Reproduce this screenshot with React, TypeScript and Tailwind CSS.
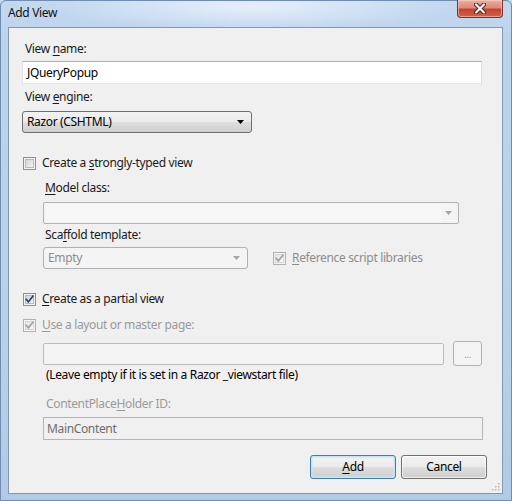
import React from "react";

const FONT = { fontFamily: '"Noto Sans", "Open Sans", sans-serif' };

function Mn({ children }: { children: React.ReactNode }) {
  return <span className="underline underline-offset-[2px] decoration-[1px]">{children}</span>;
}

function CheckBox({ checked, disabled }: { checked?: boolean; disabled?: boolean }) {
  const border = disabled ? "#b1b1b1" : "#8e8f8f";
  const mark = disabled ? "#a3a3a3" : "#30456f";
  const id = disabled ? "cbd" : "cbe";
  return (
    <svg width="13" height="13" viewBox="0 0 13 13" className="shrink-0">
      <defs>
        <linearGradient id={id} x1="0" y1="0" x2="1" y2="1">
          <stop offset="0" stopColor={disabled ? "#e6e6e6" : "#cfd2d6"} />
          <stop offset="1" stopColor={disabled ? "#f7f7f7" : "#f6f6f6"} />
        </linearGradient>
      </defs>
      <rect x="0.5" y="0.5" width="12" height="12" fill="#f4f4f4" stroke={border} />
      <rect x="2.5" y="2.5" width="8" height="8" fill={`url(#${id})`} stroke={disabled ? "#d6d6d6" : "#b7bbc0"} />
      {checked && (
        <path d="M3.2 6.4 L5.4 8.9 L9.9 3.2" fill="none" stroke={mark} strokeWidth="1.7" strokeLinecap="square" />
      )}
    </svg>
  );
}

function Arrow({ color }: { color: string }) {
  return (
    <svg width="7" height="4" viewBox="0 0 7 4" className="shrink-0">
      <polygon points="0,0 7,0 3.5,4" fill={color} />
    </svg>
  );
}

export default function App() {
  return (
    <div
      className="relative w-[512px] h-[501px] overflow-hidden text-[12px] leading-[16px] tracking-[-0.35px] text-[#1a1a1a] bg-[linear-gradient(180deg,#c3d9f0_0%,#bcd3ec_8%,#b9d1ea_60%,#b2cae5_100%)]"
      style={FONT}
    >
      {/* glass frame highlights */}
      <div className="absolute inset-0 pointer-events-none bg-[radial-gradient(ellipse_200px_26px_at_250px_6px,rgba(235,243,252,0.85),rgba(235,243,252,0))]" />
      <div className="absolute inset-0 pointer-events-none border border-[#6f8db3] rounded-t-[6px]" />

      <div className="relative flex flex-col h-full">
        {/* title bar */}
        <div className="flex items-start justify-between h-[27px] pl-[8px] pr-[9px]">
          <div className="pt-[5px] text-[12px] text-[#111]">Add View</div>
          <div className="w-[46px] h-[18px] flex items-center justify-center rounded-b-[4px] border border-t-0 border-[#7a3329] bg-[linear-gradient(180deg,#eab0a4_0%,#dd8a7b_45%,#c7432f_55%,#d3614a_100%)] shadow-[inset_0_0_0_1px_rgba(255,220,210,0.5)]">
            <svg width="14" height="11" viewBox="0 0 14 11">
              <path d="M3 1.5 L11 9.5 M11 1.5 L3 9.5" stroke="#5a1a12" strokeWidth="4" strokeLinecap="round" />
              <path d="M3 1.5 L11 9.5 M11 1.5 L3 9.5" stroke="#ffffff" strokeWidth="2.2" strokeLinecap="round" />
            </svg>
          </div>
        </div>

        {/* client area */}
        <div className="ml-[8px] mr-[9px] h-[467px] border border-[#8497b0] bg-[#f0f0f0]">
          <div className="flex flex-col pl-[13px]">
            <div className="mt-[13px] pl-[3px]">
              View <Mn>n</Mn>ame:
            </div>
            <div className="mt-[4px] w-[460px] h-[23px] flex items-center pl-[4px] bg-white border border-[#abadb3] border-l-[#e2e3ea] border-r-[#dbdfe6] border-b-[#e3e9ef] text-black">
              JQueryPopup
            </div>

            <div className="mt-[5px] pl-[3px]">
              View <Mn>e</Mn>ngine:
            </div>
            <div className="mt-[6px] w-[230px] h-[22px] flex items-center justify-between pl-[4px] pr-[7px] rounded-[3px] border border-[#707070] bg-[linear-gradient(180deg,#f2f2f2_0%,#ebebeb_48%,#dddddd_52%,#cfcfcf_100%)] text-black">
              <span>Razor (CSHTML)</span>
              <Arrow color="#000" />
            </div>

            <div className="mt-[22px] ml-[1px] h-[16px] flex items-center gap-[6px]">
              <CheckBox />
              <span>
                Create a <Mn>s</Mn>trongly-typed view
              </span>
            </div>

            <div className="flex flex-col pl-[21px]">
              <div className="mt-[9px] pl-[2px]">
                <Mn>M</Mn>odel class:
              </div>
              <div className="mt-[6px] w-[416px] h-[22px] flex items-center rounded-[2px] border border-[#adb2b5] bg-[#f4f4f4]">
                <div className="flex-1 h-[18px] ml-[2px] bg-[#f7f7f7]" />
                <div className="w-[17px] flex justify-center pr-[2px]">
                  <Arrow color="#a6a6a6" />
                </div>
              </div>

              <div className="mt-[3px] pl-[2px]">
                Sca<Mn>f</Mn>fold template:
              </div>
              <div className="mt-[4px] flex items-center">
                <div className="w-[205px] h-[22px] flex items-center justify-between pl-[4px] pr-[7px] rounded-[3px] border border-[#adb2b5] bg-[#f4f4f4] text-[#8d8d8d]">
                  <span>Empty</span>
                  <Arrow color="#a6a6a6" />
                </div>
                <div className="ml-[25px] flex items-center gap-[6px] text-[#8d8d8d]">
                  <CheckBox checked disabled />
                  <span>
                    <Mn>R</Mn>eference script libraries
                  </span>
                </div>
              </div>
            </div>

            <div className="mt-[22px] ml-[1px] h-[16px] flex items-center gap-[6px]">
              <CheckBox checked />
              <span>
                <Mn>C</Mn>reate as a partial view
              </span>
            </div>
            <div className="mt-[10px] ml-[1px] h-[16px] flex items-center gap-[6px] text-[#9a9a9a]">
              <CheckBox checked disabled />
              <span>
                <Mn>U</Mn>se a layout or master page:
              </span>
            </div>

            <div className="flex flex-col pl-[21px]">
              <div className="mt-[8px] h-[25px] flex items-center">
                <div className="w-[401px] h-[22px] rounded-[2px] border border-[#b9bcbf] bg-[#f4f4f4]" />
                <div className="ml-[9px] w-[29px] h-[25px] flex items-center justify-center rounded-[3px] border border-[#adb2b5] bg-[#f4f4f4] text-[#a0a0a0] text-[10px] leading-[10px]">
                  ...
                </div>
              </div>
              <div className="mt-[1px] pl-[3px] text-black">(Leave empty if it is set in a Razor _viewstart file)</div>

              <div className="mt-[13px] pl-[3px] text-[#9a9a9a]">
                ContentPlace<Mn>H</Mn>older ID:
              </div>
              <div className="mt-[5px] w-[440px] h-[23px] flex items-center pl-[3px] border border-[#b5b5b5] bg-[#f0f0f0] text-[#6d6d6d]">
                MainContent
              </div>
            </div>

            <div className="mt-[15px] pr-[15px] flex justify-end gap-[5px]">
              <div className="w-[86px] h-[24px] flex items-center justify-center rounded-[3px] border border-[#3c7fb1] bg-[linear-gradient(180deg,#f2f2f2_0%,#ebebeb_48%,#dddddd_52%,#cfcfcf_100%)] shadow-[inset_0_0_0_1px_#c4e5f6,inset_0_0_0_2px_rgba(196,229,246,0.5)] text-black">
                <span>
                  <Mn>A</Mn>dd
                </span>
              </div>
              <div className="w-[86px] h-[24px] flex items-center justify-center rounded-[3px] border border-[#707070] bg-[linear-gradient(180deg,#f2f2f2_0%,#ebebeb_48%,#dddddd_52%,#cfcfcf_100%)] shadow-[inset_0_0_0_1px_rgba(255,255,255,0.7)] text-black">
                Cancel
              </div>
            </div>
          </div>

          {/* size grip */}
          <div className="flex justify-end pr-[2px] mt-[2px]">
            <svg width="10" height="10" viewBox="0 0 10 10">
              {[
                [8, 2],
                [8, 5],
                [5, 5],
                [8, 8],
                [5, 8],
                [2, 8],
              ].map(([x, y], i) => (
                <rect key={i} x={x} y={y} width="1.5" height="1.5" fill="#b8b8b8" />
              ))}
            </svg>
          </div>
        </div>
      </div>
    </div>
  );
}
